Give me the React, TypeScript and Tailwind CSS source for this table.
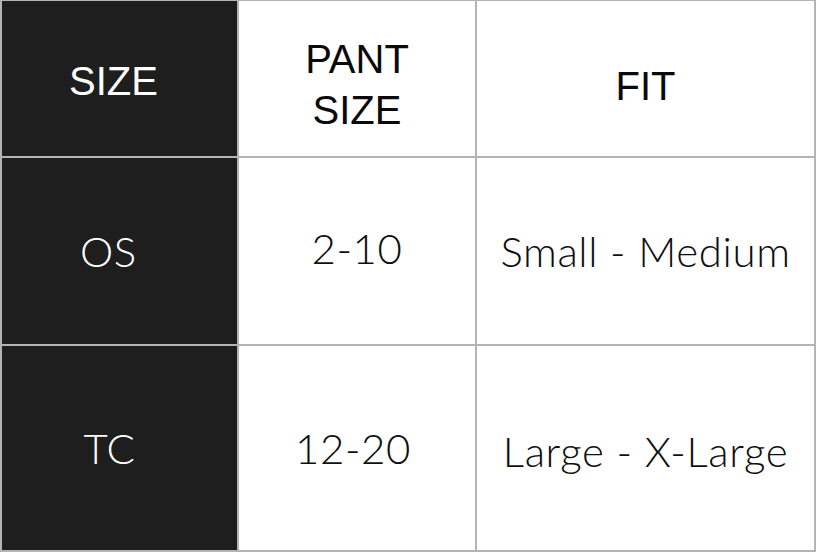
export default function App() {
  const arial = "font-['Liberation_Sans',Arial,sans-serif]";
  const avenir = "font-['Lato','Noto_Sans',sans-serif] font-light tracking-[0.6px]";
  return (
    <div className="w-[817px] h-[553px] bg-white">
      <div className="w-[816px] h-[552px] bg-[#b4b4b4] pt-px pl-[2px] pr-[2px] pb-[2px] grid grid-cols-[235px_236px_337px] grid-rows-[155px_186px_204px] gap-[2px]">
        <div className={`bg-[#1e1e1e] flex items-center justify-center text-white text-[40px] leading-none pt-[4px] pr-[12px] ${arial}`}>SIZE</div>
        <div className={`bg-white flex items-center justify-center text-center text-[#0a0a0a] text-[40px] leading-[51px] pt-[12px] ${arial}`}>PANT<br />SIZE</div>
        <div className={`bg-white flex items-center justify-center text-[#0a0a0a] text-[40px] leading-none pt-[14px] ${arial}`}>FIT</div>

        <div className={`bg-[#1e1e1e] flex items-center justify-center text-white text-[42px] leading-none pr-[22px] ${avenir}`}>OS</div>
        <div className={`bg-white flex items-center justify-center text-[#0f0f0f] text-[42px] leading-none pb-[6px] ${avenir}`}>2-10</div>
        <div className={`bg-white flex items-center justify-center text-[#0f0f0f] text-[42px] leading-none ${avenir}`}>Small - Medium</div>

        <div className={`bg-[#1e1e1e] flex items-center justify-center text-white text-[42px] leading-none pr-[20px] ${avenir}`}>TC</div>
        <div className={`bg-white flex items-center justify-center text-[#0f0f0f] text-[42px] leading-none pr-[8px] ${avenir}`}>12-20</div>
        <div className={`bg-white flex items-center justify-center text-[#0f0f0f] text-[42px] leading-none pt-[6px] ${avenir}`}>Large - X-Large</div>
      </div>
    </div>
  );
}
